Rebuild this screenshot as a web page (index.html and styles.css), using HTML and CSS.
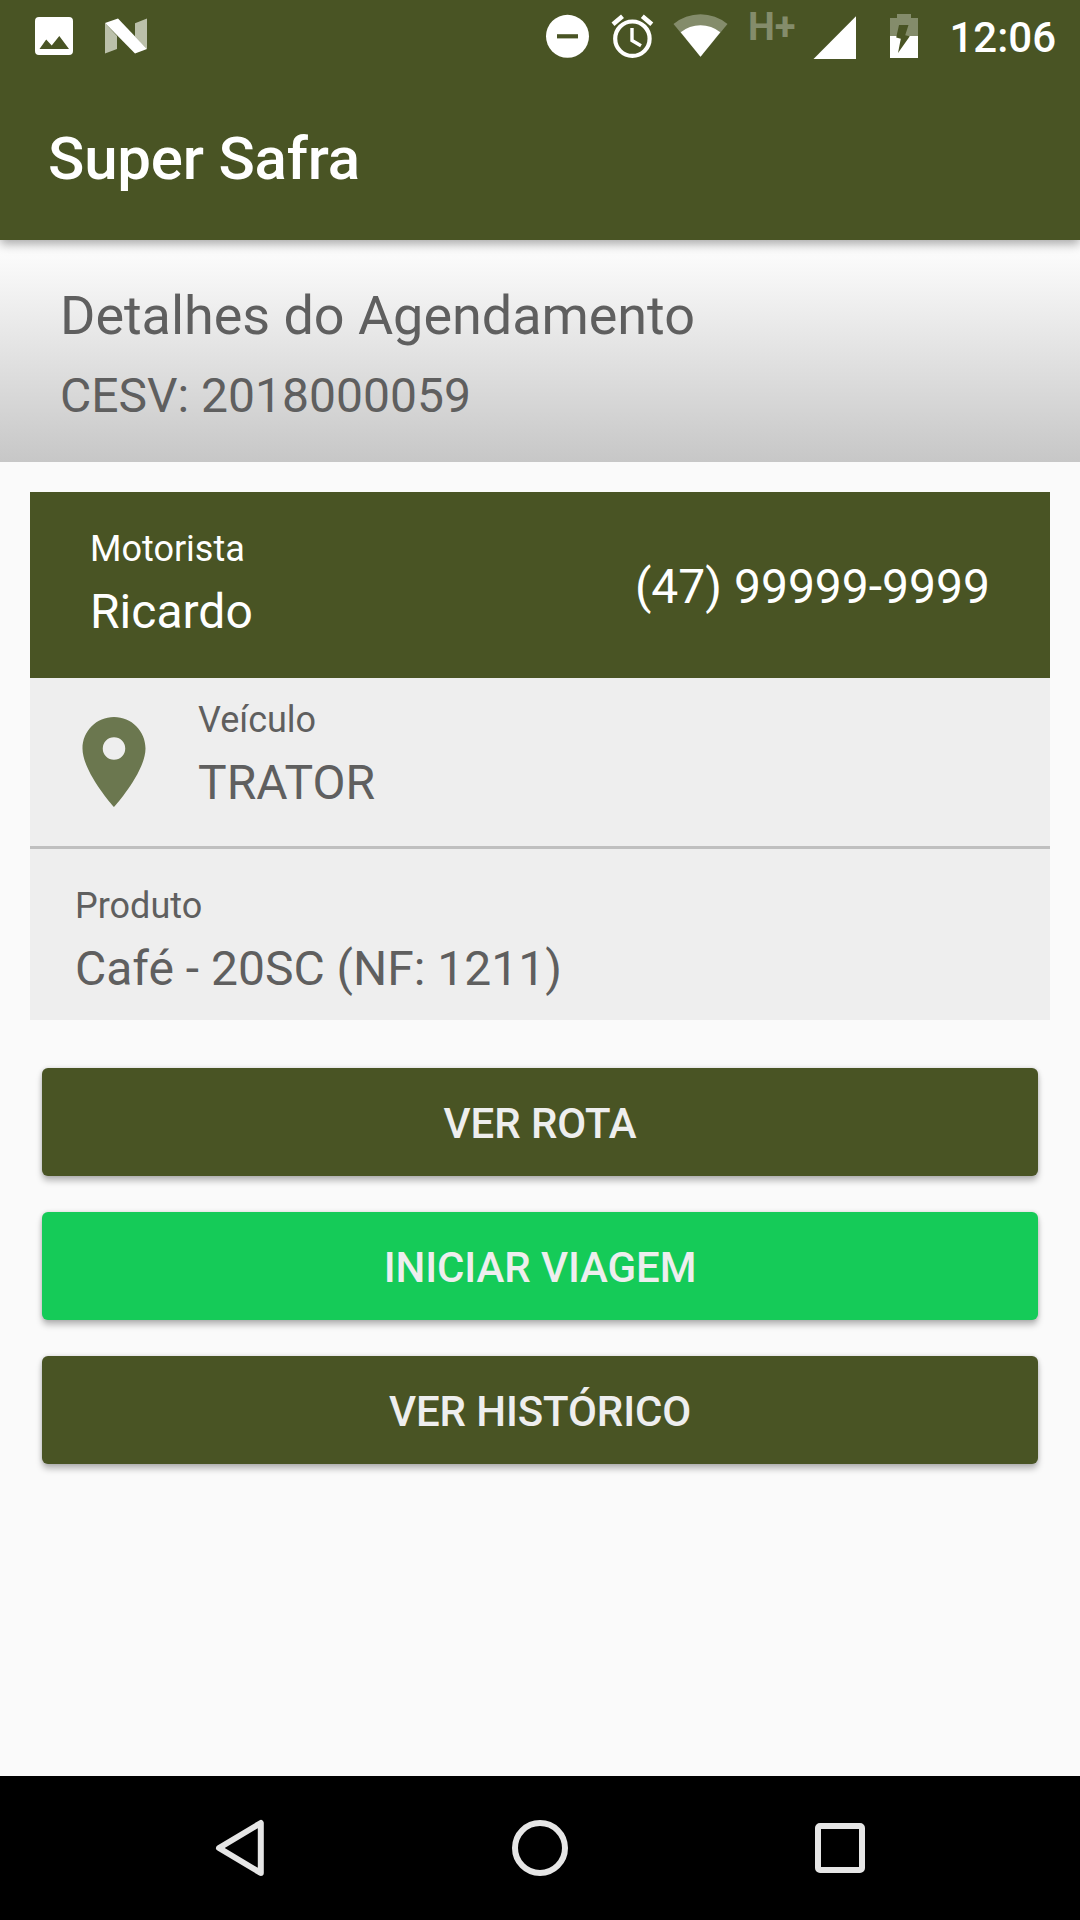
FILE: index.html
```html
<!DOCTYPE html>
<html lang="pt-BR">
    <head>
        <meta charset="UTF-8" />
        <meta name="viewport" content="width=device-width, initial-scale=1.0" />
        <title>Super Safra</title>
        <link rel="stylesheet" href="styles.css">
    </head>

    <body>
        <!-- status bar -->
        <div class="status-bar">
            <svg class="notifications" width="112" height="72" viewBox="35 0 112 72">
                <path
                    fill="#fff"
                    fill-rule="evenodd"
                    d="M39 17h30a4 4 0 0 1 4 4v30a4 4 0 0 1-4 4H39a4 4 0 0 1-4-4V21a4 4 0 0 1 4-4zM39.5 49H69L59.3 36l-7.6 9.5-5.5-6z"
                />
                <path fill="#bbc0aa" d="M105 23l12 13v13l-12 4.5zM147 18.5V49l-12-12.5V23.3z" />
                <path fill="#fff" d="M105 23l13-4.5L147 49l-12 4.5z" />
            </svg>
            <div class="system-icons">
                <svg width="182" height="72" viewBox="546 0 182 72">
                    <circle cx="567.5" cy="36.3" r="21.5" fill="#fff" />
                    <path d="M557 36.3h21" stroke="#495424" stroke-width="4.2" />
                    <g fill="none" stroke="#fff">
                        <circle cx="632.4" cy="38.7" r="17.2" stroke-width="4.2" />
                        <path d="M632 28v12.5l9 5.3" stroke-width="3.4" />
                        <path d="M613 24.2l9.5-7.9M642.3 16.3l9.5 7.9" stroke-width="4.6" />
                    </g>
                    <path fill="#848c6b" d="M673.5 24A42.4 42.4 0 0 1 727.5 24L700.5 56.7z" />
                    <path fill="#fff" d="M680.7 32.3A31 31 0 0 1 720.3 32.3L700.5 56.7z" />
                </svg>
                <span class="network">H+</span>
                <svg width="106" height="72" viewBox="813 0 106 72">
                    <path fill="#fff" d="M813.5 59L856 16.3V59z" />
                    <path fill="#848c6b" d="M897 14h14v4h7v18h-28V18h7z" />
                    <path fill="#fff" d="M890 36h28v22h-28z" />
                    <path fill="#495424" d="M899 25h9.5l-3.3 10.3 4.6.9L898 53l2.8-14.3-4.6-1.2z" />
                </svg>
                <span class="clock">12:06</span>
            </div>
        </div>

        <div class="toolbar">
            <h1>Super Safra</h1>
        </div>

        <div class="page-header">
            <h2>Detalhes do Agendamento</h2>
            <h3>CESV: 2018000059</h3>
        </div>

        <div class="card">
            <div class="driver">
                <div>
                    <p class="label">Motorista</p>
                    <p class="value">Ricardo</p>
                </div>
                <p class="value phone">(47) 99999-9999</p>
            </div>
            <div class="vehicle">
                <svg class="pin" viewBox="0 0 24 24">
                    <path
                        d="M12 2C8.13 2 5 5.13 5 9c0 5.25 7 13 7 13s7-7.75 7-13c0-3.87-3.13-7-7-7zm0 9.5a2.5 2.5 0 0 1 0-5 2.5 2.5 0 0 1 0 5z"
                    />
                </svg>
                <div>
                    <p class="label">Veículo</p>
                    <p class="value">TRATOR</p>
                </div>
            </div>
            <div class="product">
                <p class="label">Produto</p>
                <p class="value">Café - 20SC (NF: 1211)</p>
            </div>
        </div>

        <div class="actions">
            <button>VER ROTA</button>
            <button class="start">INICIAR VIAGEM</button>
            <button>VER HISTÓRICO</button>
        </div>

        <!-- navigation bar -->
        <div class="nav-bar">
            <svg viewBox="0 0 60 60">
                <path d="M9 30l41.8-25v50z" />
            </svg>
            <svg viewBox="0 0 60 60">
                <circle cx="30" cy="30" r="25" />
            </svg>
            <svg viewBox="0 0 60 60">
                <rect x="8" y="8" width="44" height="44" rx="2" />
            </svg>
        </div>
    </body>
</html>
```
FILE: styles.css
```css
* {
    margin: 0;
    padding: 0;
    box-sizing: border-box;
}

body {
    min-height: 1920px;
    display: flex;
    flex-direction: column;
    background-color: #fafafa;
    color: #5f5f5f;
    font-family: Roboto, sans-serif;
}

.status-bar {
    position: relative;
    z-index: 2;
    display: flex;
    justify-content: space-between;
    height: 72px;
    padding: 0 24px 0 35px;
    background-color: #495424;
    color: #fff;
}

.system-icons {
    display: flex;
}

.network {
    width: 85px;
    padding-left: 20px;
    line-height: 55px;
    font-size: 38px;
    font-weight: 700;
    color: #848c6b;
}

.clock {
    width: 137px;
    text-align: right;
    line-height: 75px;
    font-size: 42px;
    font-weight: 500;
}

.toolbar {
    position: relative;
    z-index: 1;
    display: flex;
    align-items: center;
    height: 168px;
    padding: 6px 48px 0;
    background-color: #495424;
    color: #fff;
    box-shadow: 0 4px 10px rgba(0, 0, 0, 0.35);
}

h1 {
    line-height: 72px;
    font-size: 60px;
    font-weight: 500;
    letter-spacing: -0.2px;
}

.page-header {
    height: 222px;
    padding: 40px 60px 0;
    background: linear-gradient(#fff, #c7c7c7);
}

h2 {
    line-height: 72px;
    font-size: 54px;
    font-weight: 400;
    letter-spacing: -0.05px;
}

h3 {
    margin-top: 12px;
    line-height: 64px;
    font-size: 48px;
    font-weight: 400;
}

.label {
    line-height: 48px;
    font-size: 36px;
}

.value {
    line-height: 64px;
    font-size: 48px;
}

.label + .value {
    margin-top: 7px;
}

.card {
    height: 528px;
    margin: 30px 30px 0;
    background-color: #eee;
}

.driver {
    display: flex;
    justify-content: space-between;
    height: 186px;
    padding: 33px 60px 0;
    background-color: #495424;
    color: #fff;
}

.phone {
    margin-top: 30px;
}

.vehicle {
    display: flex;
    gap: 30px;
    height: 171px;
    padding: 18px 30px 0;
    border-bottom: 3px solid #bfbfbf;
}

.pin {
    width: 108px;
    height: 108px;
    margin-top: 12px;
    fill: #6b774f;
}

.product {
    padding: 33px 45px 0;
}

.actions {
    display: flex;
    flex-direction: column;
    gap: 36px;
    padding: 48px 42px;
}

button {
    height: 108px;
    padding-top: 2px;
    border: none;
    border-radius: 6px;
    background-color: #495424;
    box-shadow: 0 5px 6px rgba(0, 0, 0, 0.25), 0 0 4px rgba(0, 0, 0, 0.15);
    color: #eee;
    font-family: inherit;
    font-size: 42px;
    font-weight: 500;
    letter-spacing: -0.1px;
}

.start {
    background-color: #15cb58;
}

.nav-bar {
    display: flex;
    justify-content: center;
    align-items: center;
    gap: 240px;
    height: 144px;
    margin-top: auto;
    background-color: #000;
}

.nav-bar svg {
    width: 60px;
    height: 60px;
    fill: none;
    stroke: #e6e6e6;
    stroke-width: 6;
    stroke-linejoin: round;
}
```
